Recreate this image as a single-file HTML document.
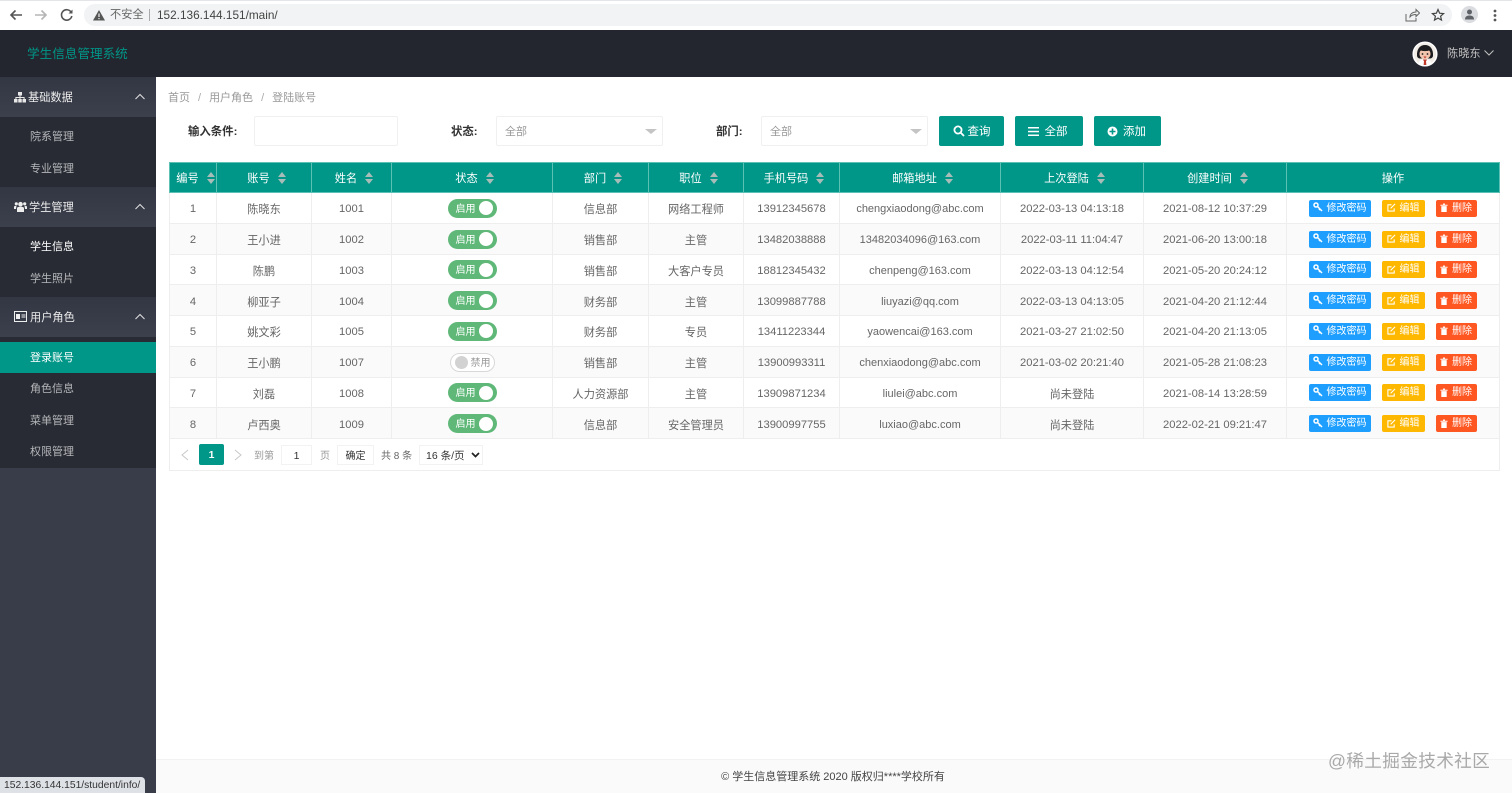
<!DOCTYPE html>
<html lang="zh"><head><meta charset="utf-8"><title>学生信息管理系统</title>
<style>
*{box-sizing:border-box}
html,body{margin:0;padding:0;width:1512px;height:793px;overflow:hidden;background:#fff;font-family:"Liberation Sans","Noto Sans CJK SC",sans-serif;color:#666}
.a{position:absolute}
#chrome{left:0;top:0;width:1512px;height:30px;background:#fff;border-top:1px solid #e3e5e8}
#url{left:84px;top:4px;width:1368px;height:22px;border-radius:11px;background:#f1f3f4}
#top{left:0;top:30px;width:1512px;height:47px;background:#23262e}
#side{left:0;top:77px;width:156px;height:716px;background:#393d49}
.g{position:absolute;left:0;width:156px;height:40px;background:linear-gradient(#333743,#3c404c);color:#eee;font-size:11.2px;line-height:42px;padding-left:30px}
.g svg.ic{position:absolute;left:14px;top:14px}
.g svg.ch{position:absolute;left:134px;top:16px}
.sub{position:absolute;left:0;width:156px;background:#282b33}
.i{position:absolute;left:0;width:156px;height:31px;line-height:31px;padding-left:30px;font-size:11px;color:#b4b6b9}
table{position:absolute;left:169px;top:162px;width:1330px;border-collapse:collapse;table-layout:fixed;font-size:11.2px}
th{height:30px;background:#009688;color:#fff;font-weight:normal;border:1px solid #5cc0b5;font-size:11.2px;padding:0 0 0 6px;text-align:center;white-space:nowrap}
th:last-child{padding:0}
td{height:30.75px;padding:3px 0 0;text-align:center;border:1px solid #eeeeee;color:#666;white-space:nowrap}
td:nth-child(8){font-size:11px}
td:nth-child(4){padding-top:1px}
td:last-child{padding:1px 1px 0 0}
tr:nth-child(odd) td{background:#fafafa}
.s{display:inline-block;position:relative;width:12px;height:12px;vertical-align:-2px;margin-left:5px}
.s:before{content:"";position:absolute;left:3px;top:0;border:4px solid transparent;border-top:0;border-bottom:5px solid #a8bcb8}
.s:after{content:"";position:absolute;left:3px;top:7px;border:4px solid transparent;border-bottom:0;border-top:5px solid #a8bcb8}
.on,.off{display:inline-block;position:relative;width:49px;height:19px;border-radius:10px;background:#5fb878;color:#fff;font-size:10px;line-height:21px;text-align:left;padding-left:8px;vertical-align:middle}
.on:after{content:"";position:absolute;right:4px;top:2.5px;width:14px;height:14px;border-radius:50%;background:#fff}
.off{width:45px;background:#fff;border:1px solid #d8d8d8;color:#999;padding-left:20px;line-height:19px}
.off:after{content:"";position:absolute;left:4px;top:2px;width:13px;height:13px;border-radius:50%;background:#d2d2d2}
.b{display:inline-block;height:17px;line-height:18px;border-radius:2px;color:#fff;font-size:10px;text-align:center;vertical-align:middle}
.b svg{vertical-align:-1.5px;margin-right:4px}
.b1{width:62px;background:#1e9fff;margin-right:11px}
.b2{width:43px;background:#ffb800;margin-right:11px}
.b3{width:41px;background:#ff5722}
.lab{position:absolute;font-size:11.4px;color:#333;font-weight:bold;line-height:16px}
.inp{position:absolute;height:30px;top:116px;background:#fff;border:1px solid #f0f0f0;border-radius:2px;font-size:11px;color:#999;line-height:30px;padding-left:8px}
.inp:after{content:"";position:absolute;right:5px;top:12px;border:5px solid transparent;border-bottom:0;border-top:5px solid #c4c4c4;border-left-width:6px;border-right-width:6px}
.inp.n:after{display:none}
.btn{position:absolute;top:116px;height:30px;background:#009688;border-radius:2px;color:#fff;font-size:11.5px;line-height:32px;text-align:center}
.btn svg{vertical-align:-2px;margin-right:3px}
.pg{position:absolute;font-size:10px;color:#999;line-height:22px}
.pb{position:absolute;top:445px;height:20px;border:1px solid #f2f2f2;background:#fff;text-align:center;line-height:20px;font-size:10.5px;color:#333}
</style></head><body>

<div class="a" id="chrome"></div>
<svg class="a" style="left:8px;top:7px" width="70" height="16" viewBox="0 0 70 16" fill="none" stroke-width="1.6">
<path d="M14 8H3M7.5 3.500 3 8l4.500 4.500" stroke="#555"/>
<path d="M27 8h11M33.500 3.500 38 8l-4.500 4.500" stroke="#b5b5b5"/>
<path d="M63 5a5.200 5.200 0 1 0 .8 4" stroke="#555"/><path d="M64.500 2.500v4h-4z" fill="#555" stroke="none"/>
</svg>
<div class="a" id="url"></div>
<svg class="a" style="left:92px;top:9px" width="14" height="12" viewBox="0 0 14 12"><path d="M7 1 13 11.500H1z" fill="#555"/><rect x="6.400" y="4.500" width="1.200" height="3.500" fill="#f1f3f4"/><rect x="6.400" y="9" width="1.200" height="1.200" fill="#f1f3f4"/></svg>
<div class="a" style="left:110px;top:7px;font-size:11.200px;color:#666;line-height:16px;white-space:nowrap">不安全</div>
<div class="a" style="left:149px;top:9px;width:1px;height:12px;background:#aaa"></div>
<div class="a" style="left:157px;top:7px;font-size:11.800px;color:#444;line-height:16px;white-space:nowrap">152.136.144.151/main/</div>
<svg class="a" style="left:1405px;top:8px" width="15" height="14" viewBox="0 0 15 14" fill="none" stroke="#666" stroke-width="1"><path d="M1 6v7h10V10M5 9c0-3 2.500-5 6-5V1.500l3.500 3.500L11 8.500V6.500C8.500 6.500 6.500 7 5 9z"/></svg>
<svg class="a" style="left:1431px;top:8px" width="14" height="14" viewBox="0 0 14 14" fill="none" stroke="#444" stroke-width="1.200"><path d="M7 1.500 8.600 5.200l4 .4-3 2.600.9 3.900L7 10.100 3.500 12.100l.9-3.900-3-2.600 4-.4z"/></svg>
<div class="a" style="left:1461px;top:6px;width:17px;height:17px;border-radius:50%;background:#dadce0"></div>
<svg class="a" style="left:1464px;top:9px" width="11" height="11" viewBox="0 0 11 11" fill="#5f6368"><circle cx="5.500" cy="3" r="2.500"/><path d="M1 10.500c0-3 2-4 4.500-4s4.500 1 4.500 4z"/></svg>
<svg class="a" style="left:1493px;top:9px" width="4" height="13" fill="#555"><circle cx="2" cy="2" r="1.400"/><circle cx="2" cy="6.500" r="1.400"/><circle cx="2" cy="11" r="1.400"/></svg>

<div class="a" id="top"></div>
<div class="a" style="left:27px;top:45px;font-size:12.600px;color:#009688;line-height:18px;white-space:nowrap">学生信息管理系统</div>
<svg class="a" style="left:1412px;top:41px" width="26" height="26" viewBox="0 0 26 26"><circle cx="13" cy="13" r="12" fill="#f2ece6"/><path d="M5 15C4.500 8 8 4 13 4s8.500 4 8 11c-.5 2-2 2.500-3 2.500H8C7 17.500 5.500 17 5 15z" fill="#1d1d1f"/><path d="M7.500 13c0-1.500 .5-3 1.500-3.500 2 .8 6 .8 8 0 1 .5 1.500 2 1.500 3.500 0 3-2.500 5-5.500 5s-5.500-2-5.500-5z" fill="#f3c4ad"/><circle cx="10.500" cy="13" r=".9" fill="#222"/><circle cx="15.500" cy="13" r=".9" fill="#222"/><path d="M11.500 15.500h3l-1.500 2z" fill="#c0392b"/><path d="M6.500 22c1-2.500 3-3.500 6.500-3.500s5.500 1 6.500 3.500C17.500 24 15.500 24.700 13 24.700S8.500 24 6.500 22z" fill="#fff"/><path d="M11 18.500h4l-1 2 .4 3.500h-2.800l.4-3.500z" fill="#c0392b"/><circle cx="13" cy="13" r="11.800" fill="none" stroke="#fff" stroke-width="1.500"/></svg>
<div class="a" style="left:1447px;top:46px;font-size:11.200px;color:#c2c2c2;line-height:16px;white-space:nowrap">陈晓东</div>
<svg class="a" style="left:1484px;top:50px" width="10" height="6" fill="none" stroke="#c2c2c2" stroke-width="1"><path d="M.5.500 5 5 9.500.5"/></svg>

<div class="a" id="side"></div>
<div class="sub" style="top:117px;height:70px"></div>
<div class="sub" style="top:227px;height:70px"></div>
<div class="sub" style="top:337px;height:131px"></div>

<div class="g" style="top:77px;padding-left:28px">基础数据
<svg class="ic" width="12" height="12" viewBox="0 0 12 12" fill="#e8e8e8"><rect x="4" y="1" width="4" height="3.500"/><rect x="0" y="8" width="3.500" height="3.500"/><rect x="4.250" y="8" width="3.500" height="3.500"/><rect x="8.500" y="8" width="3.500" height="3.500"/><path d="M5.500 4.500h1V6H10.600V8h-1V7H6.500v1h-1V7H2.400v1h-1V6H5.500z"/></svg>
<svg class="ch" width="12" height="7" fill="none" stroke="#ddd" stroke-width="1.100"><path d="M1.500 6 6 1.500 10.500 6"/></svg></div>
<div class="i" style="top:122px">院系管理</div>
<div class="i" style="top:154px">专业管理</div>

<div class="g" style="top:187px;padding-left:29px">学生管理
<svg class="ic" width="13" height="12" viewBox="0 0 13 12" fill="#eee"><circle cx="6.500" cy="3.200" r="2.300"/><circle cx="2.300" cy="2.800" r="1.600"/><circle cx="10.700" cy="2.800" r="1.600"/><path d="M3 11V7.500C3 6.300 4 5.800 6.500 5.800S10 6.300 10 7.500V11z"/><path d="M0 8V6c0-1 .8-1.300 2.500-1.300L2 8zM13 8V6c0-1-.8-1.300-2.500-1.300L11 8z"/></svg>
<svg class="ch" width="12" height="7" fill="none" stroke="#ddd" stroke-width="1.100"><path d="M1.500 6 6 1.500 10.500 6"/></svg></div>
<div class="i" style="top:232px;color:#fff">学生信息</div>
<div class="i" style="top:264px">学生照片</div>

<div class="g" style="top:297px">用户角色
<svg class="ic" width="13" height="11" viewBox="0 0 13 11"><rect x=".5" y=".5" width="12" height="10" fill="none" stroke="#eee"/><rect x="2" y="3" width="4" height="5" fill="#eee"/><path d="M7.500 4h4M7.500 6h4" stroke="#eee"/></svg>
<svg class="ch" width="12" height="7" fill="none" stroke="#ddd" stroke-width="1.100"><path d="M1.500 6 6 1.500 10.500 6"/></svg></div>
<div class="i" style="top:342px;background:#009688;color:#fff;line-height:33px">登录账号</div>
<div class="i" style="top:374px">角色信息</div>
<div class="i" style="top:406px">菜单管理</div>
<div class="i" style="top:437px">权限管理</div>

<div class="a" style="left:168px;top:90px;font-size:11px;color:#999;line-height:16px;white-space:nowrap">首页<span style="margin:0 8px;color:#aaa">/</span>用户角色<span style="margin:0 8px;color:#aaa">/</span>登陆账号</div>

<div class="lab" style="left:188px;top:124px">输入条件:</div>
<div class="inp n" style="left:254px;width:144px"></div>
<div class="lab" style="left:451px;top:124px">状态:</div>
<div class="inp" style="left:496px;width:167px">全部</div>
<div class="lab" style="left:716px;top:124px">部门:</div>
<div class="inp" style="left:761px;width:167px">全部</div>
<div class="btn" style="left:939px;width:65px"><svg width="12" height="12" viewBox="0 0 12 12" fill="none" stroke="#fff" stroke-width="1.800"><circle cx="5" cy="5" r="3.600"/><path d="M7.500 7.500 11 11"/></svg>查询</div>
<div class="btn" style="left:1015px;width:68px;padding-right:3px"><svg width="12" height="11" viewBox="0 0 12 11" fill="#fff" style="margin-right:5px"><rect y="1" width="11" height="1.500"/><rect y="4.800" width="11" height="1.500"/><rect y="8.500" width="11" height="1.500"/></svg>全部</div>
<div class="btn" style="left:1094px;width:67px;padding-right:2px"><svg width="11" height="11" viewBox="0 0 11 11" style="margin-right:5px"><circle cx="5.500" cy="5.500" r="5" fill="#fff"/><path d="M5.500 2.500v6M2.500 5.500h6" stroke="#009688" stroke-width="1.600"/></svg>添加</div>

<table>
<colgroup><col style="width:47px"><col style="width:95px"><col style="width:80px"><col style="width:161px"><col style="width:96px"><col style="width:95px"><col style="width:96px"><col style="width:161px"><col style="width:143px"><col style="width:143px"><col style="width:213px"></colgroup>
<tr><th>编号<span class="s"></span></th><th>账号<span class="s"></span></th><th>姓名<span class="s"></span></th><th>状态<span class="s"></span></th><th>部门<span class="s"></span></th><th>职位<span class="s"></span></th><th>手机号码<span class="s"></span></th><th>邮箱地址<span class="s"></span></th><th>上次登陆<span class="s"></span></th><th>创建时间<span class="s"></span></th><th>操作</th></tr>
<tr><td>1</td><td>陈晓东</td><td>1001</td><td><span class="on">启用</span></td><td>信息部</td><td>网络工程师</td><td>13912345678</td><td>chengxiaodong@abc.com</td><td>2022-03-13 04:13:18</td><td>2021-08-12 10:37:29</td><td><span class="b b1"><svg width="10" height="10" viewBox="0 0 10 10" fill="none" stroke="#fff" stroke-width="1.500"><circle cx="3" cy="3" r="2"/><path d="M4.500 4.500 9 9M7 7 6 8"/></svg>修改密码</span><span class="b b2"><svg width="9" height="9" viewBox="0 0 10 10" fill="none" stroke="#fff" stroke-width="1.200"><path d="M8 6v3H1V2h4M4 6l5-5"/></svg>编辑</span><span class="b b3"><svg width="8" height="9" viewBox="0 0 8 10" fill="#fff"><path d="M0 2h8v1H0zM3 .5h2V2H3zM1 3.500h6V10H1z"/></svg>删除</span></td></tr>
<tr><td>2</td><td>王小进</td><td>1002</td><td><span class="on">启用</span></td><td>销售部</td><td>主管</td><td>13482038888</td><td>13482034096@163.com</td><td>2022-03-11 11:04:47</td><td>2021-06-20 13:00:18</td><td><span class="b b1"><svg width="10" height="10" viewBox="0 0 10 10" fill="none" stroke="#fff" stroke-width="1.500"><circle cx="3" cy="3" r="2"/><path d="M4.500 4.500 9 9M7 7 6 8"/></svg>修改密码</span><span class="b b2"><svg width="9" height="9" viewBox="0 0 10 10" fill="none" stroke="#fff" stroke-width="1.200"><path d="M8 6v3H1V2h4M4 6l5-5"/></svg>编辑</span><span class="b b3"><svg width="8" height="9" viewBox="0 0 8 10" fill="#fff"><path d="M0 2h8v1H0zM3 .5h2V2H3zM1 3.500h6V10H1z"/></svg>删除</span></td></tr>
<tr><td>3</td><td>陈鹏</td><td>1003</td><td><span class="on">启用</span></td><td>销售部</td><td>大客户专员</td><td>18812345432</td><td>chenpeng@163.com</td><td>2022-03-13 04:12:54</td><td>2021-05-20 20:24:12</td><td><span class="b b1"><svg width="10" height="10" viewBox="0 0 10 10" fill="none" stroke="#fff" stroke-width="1.500"><circle cx="3" cy="3" r="2"/><path d="M4.500 4.500 9 9M7 7 6 8"/></svg>修改密码</span><span class="b b2"><svg width="9" height="9" viewBox="0 0 10 10" fill="none" stroke="#fff" stroke-width="1.200"><path d="M8 6v3H1V2h4M4 6l5-5"/></svg>编辑</span><span class="b b3"><svg width="8" height="9" viewBox="0 0 8 10" fill="#fff"><path d="M0 2h8v1H0zM3 .5h2V2H3zM1 3.500h6V10H1z"/></svg>删除</span></td></tr>
<tr><td>4</td><td>柳亚子</td><td>1004</td><td><span class="on">启用</span></td><td>财务部</td><td>主管</td><td>13099887788</td><td>liuyazi@qq.com</td><td>2022-03-13 04:13:05</td><td>2021-04-20 21:12:44</td><td><span class="b b1"><svg width="10" height="10" viewBox="0 0 10 10" fill="none" stroke="#fff" stroke-width="1.500"><circle cx="3" cy="3" r="2"/><path d="M4.500 4.500 9 9M7 7 6 8"/></svg>修改密码</span><span class="b b2"><svg width="9" height="9" viewBox="0 0 10 10" fill="none" stroke="#fff" stroke-width="1.200"><path d="M8 6v3H1V2h4M4 6l5-5"/></svg>编辑</span><span class="b b3"><svg width="8" height="9" viewBox="0 0 8 10" fill="#fff"><path d="M0 2h8v1H0zM3 .5h2V2H3zM1 3.500h6V10H1z"/></svg>删除</span></td></tr>
<tr><td>5</td><td>姚文彩</td><td>1005</td><td><span class="on">启用</span></td><td>财务部</td><td>专员</td><td>13411223344</td><td>yaowencai@163.com</td><td>2021-03-27 21:02:50</td><td>2021-04-20 21:13:05</td><td><span class="b b1"><svg width="10" height="10" viewBox="0 0 10 10" fill="none" stroke="#fff" stroke-width="1.500"><circle cx="3" cy="3" r="2"/><path d="M4.500 4.500 9 9M7 7 6 8"/></svg>修改密码</span><span class="b b2"><svg width="9" height="9" viewBox="0 0 10 10" fill="none" stroke="#fff" stroke-width="1.200"><path d="M8 6v3H1V2h4M4 6l5-5"/></svg>编辑</span><span class="b b3"><svg width="8" height="9" viewBox="0 0 8 10" fill="#fff"><path d="M0 2h8v1H0zM3 .5h2V2H3zM1 3.500h6V10H1z"/></svg>删除</span></td></tr>
<tr><td>6</td><td>王小鹏</td><td>1007</td><td><span class="off">禁用</span></td><td>销售部</td><td>主管</td><td>13900993311</td><td>chenxiaodong@abc.com</td><td>2021-03-02 20:21:40</td><td>2021-05-28 21:08:23</td><td><span class="b b1"><svg width="10" height="10" viewBox="0 0 10 10" fill="none" stroke="#fff" stroke-width="1.500"><circle cx="3" cy="3" r="2"/><path d="M4.500 4.500 9 9M7 7 6 8"/></svg>修改密码</span><span class="b b2"><svg width="9" height="9" viewBox="0 0 10 10" fill="none" stroke="#fff" stroke-width="1.200"><path d="M8 6v3H1V2h4M4 6l5-5"/></svg>编辑</span><span class="b b3"><svg width="8" height="9" viewBox="0 0 8 10" fill="#fff"><path d="M0 2h8v1H0zM3 .5h2V2H3zM1 3.500h6V10H1z"/></svg>删除</span></td></tr>
<tr><td>7</td><td>刘磊</td><td>1008</td><td><span class="on">启用</span></td><td>人力资源部</td><td>主管</td><td>13909871234</td><td>liulei@abc.com</td><td>尚未登陆</td><td>2021-08-14 13:28:59</td><td><span class="b b1"><svg width="10" height="10" viewBox="0 0 10 10" fill="none" stroke="#fff" stroke-width="1.500"><circle cx="3" cy="3" r="2"/><path d="M4.500 4.500 9 9M7 7 6 8"/></svg>修改密码</span><span class="b b2"><svg width="9" height="9" viewBox="0 0 10 10" fill="none" stroke="#fff" stroke-width="1.200"><path d="M8 6v3H1V2h4M4 6l5-5"/></svg>编辑</span><span class="b b3"><svg width="8" height="9" viewBox="0 0 8 10" fill="#fff"><path d="M0 2h8v1H0zM3 .5h2V2H3zM1 3.500h6V10H1z"/></svg>删除</span></td></tr>
<tr><td>8</td><td>卢西奥</td><td>1009</td><td><span class="on">启用</span></td><td>信息部</td><td>安全管理员</td><td>13900997755</td><td>luxiao@abc.com</td><td>尚未登陆</td><td>2022-02-21 09:21:47</td><td><span class="b b1"><svg width="10" height="10" viewBox="0 0 10 10" fill="none" stroke="#fff" stroke-width="1.500"><circle cx="3" cy="3" r="2"/><path d="M4.500 4.500 9 9M7 7 6 8"/></svg>修改密码</span><span class="b b2"><svg width="9" height="9" viewBox="0 0 10 10" fill="none" stroke="#fff" stroke-width="1.200"><path d="M8 6v3H1V2h4M4 6l5-5"/></svg>编辑</span><span class="b b3"><svg width="8" height="9" viewBox="0 0 8 10" fill="#fff"><path d="M0 2h8v1H0zM3 .5h2V2H3zM1 3.500h6V10H1z"/></svg>删除</span></td></tr>
</table>

<div class="a" style="left:169px;top:438px;width:1331px;height:33px;border:1px solid #eee"></div>
<svg class="a" style="left:180px;top:449px" width="64" height="12" fill="none" stroke="#c8c8c8" stroke-width="1"><path d="M8 1 2 6l6 5M55 1l6 5-6 5"/></svg>
<div class="a" style="left:199px;top:444px;width:25px;height:21px;background:#009688;border-radius:2px;color:#fff;font-size:10.500px;font-weight:bold;text-align:center;line-height:23px">1</div>
<div class="pg" style="left:254px;top:446px">到第</div>
<div class="pb" style="left:281px;width:31px">1</div>
<div class="pg" style="left:320px;top:446px">页</div>
<div class="pb" style="left:337px;width:37px;font-size:10px;line-height:22px">确定</div>
<div class="pg" style="left:381px;top:446px;color:#666">共 8 条</div>
<div class="pb" style="left:419px;width:64px;text-align:left;padding-left:6px">16 条/页</div>
<svg class="a" style="left:471px;top:452px" width="9" height="6" fill="none" stroke="#222" stroke-width="1.700"><path d="M1 1l3.500 3.500L8 1"/></svg>

<div class="a" style="left:156px;top:759px;width:1356px;height:34px;background:#fafafa;border-top:1px solid #f2f2f2;font-size:11px;color:#444;text-align:center;line-height:34px;padding-right:2px">© 学生信息管理系统 2020 版权归****学校所有</div>
<div class="a" style="left:1328px;top:750px;font-size:17.700px;color:#a9a9a9;line-height:22px;white-space:nowrap;letter-spacing:.3px">@稀土掘金技术社区</div>
<div class="a" style="left:0;top:777px;width:145px;height:16px;background:#dee1e6;border-radius:0 4px 0 0;font-size:10.300px;color:#333;line-height:17px;padding-left:4px;white-space:nowrap">152.136.144.151/student/info/</div>
</body></html>
